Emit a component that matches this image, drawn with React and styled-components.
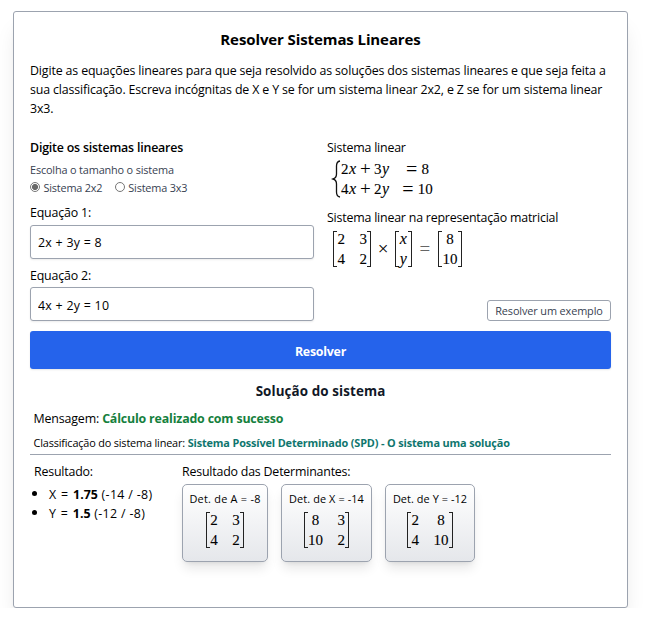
import React, { useState } from "react";
import styled, { createGlobalStyle } from "styled-components";

const line = "#9ca3af";

const GlobalStyle = createGlobalStyle`
  * { box-sizing: border-box; }
  body {
    margin: 0;
    background: #fff;
    color: #000;
    font-family: "Open Sans", "Noto Sans", sans-serif;
    font-size: 12.4px;
    line-height: 19px;
    letter-spacing: -0.15px;
    overflow: hidden;
  }
  h1, h2, h3, p, ul { margin: 0; padding: 0; }
`;

const Card = styled.main`
  width: 615px;
  height: 597px;
  margin: 11px 0 0 13px;
  padding: 16px;
  border: 1px solid ${line};
  border-radius: 3px;
  background: #fff;
  box-shadow: 0 16px 20px -4px rgba(0, 0, 0, 0.1), 0 6px 8px -5px rgba(0, 0, 0, 0.1);
`;

const Title = styled.h1`
  font-size: 15px;
  font-weight: 700;
  line-height: 22px;
  letter-spacing: -0.1px;
  text-align: center;
`;

const Intro = styled.p`
  margin-top: 11px;
  letter-spacing: -0.145px;
  white-space: pre-line;
`;

const Columns = styled.div`
  display: grid;
  grid-template-columns: 284px 284px;
  column-gap: 13px;
  height: 183px;
  margin-top: 20px;
`;

const Column = styled.section`
  display: flex;
  flex-direction: column;
`;

const FormTitle = styled.h2`
  font-size: 12.4px;
  font-weight: 600;
  line-height: 20px;
  letter-spacing: -0.2px;
`;

const Hint = styled.p`
  margin-top: 3px;
  font-size: 10.9px;
  line-height: 18px;
  letter-spacing: -0.16px;
  color: #374151;
`;

const Choices = styled.div`
  display: flex;
  gap: 12.5px;
  height: 17px;
`;

const Choice = styled.label`
  display: flex;
  align-items: center;
  gap: 3.5px;
  font-size: 10.9px;
  letter-spacing: -0.2px;
  color: #374151;
`;

const Radio = styled.input`
  appearance: none;
  width: 10px;
  height: 10px;
  margin: -2px 0 0;
  border: 1px solid #767676;
  border-radius: 50%;
  background: #fff;
  &:checked { background: radial-gradient(circle, #686868 2.7px, #fff 3.4px); }
`;

const Label = styled.label`
  height: 20px;
  margin-top: ${(p) => p.$gap}px;
  line-height: 20px;
  letter-spacing: -0.18px;
`;

const Field = styled.input`
  width: 100%;
  height: 34px;
  margin-top: ${(p) => p.$gap}px;
  padding: ${(p) => p.$drop}px 7px 0;
  border: 1px solid ${line};
  border-radius: 3px;
  background: #fff;
  color: #000;
  font: inherit;
  letter-spacing: 0.27px;
  box-shadow: 0 1px 2px rgba(0, 0, 0, 0.08);
  outline: none;
`;

const Caption = styled.p`
  height: 20px;
  line-height: 20px;
  letter-spacing: -0.2px;
  margin-top: ${(p) => p.$gap || 0}px;
`;

const MathRow = styled.div`
  display: flex;
  align-items: center;
  height: 40px;
  font-family: "Liberation Serif", serif;
  font-size: 15px;
  line-height: 20px;
  letter-spacing: 0;
  color: #000;
  -webkit-text-stroke: 0.1px #000;
`;

const SystemRow = styled(MathRow)`
  height: 40px;
  margin-top: 1px;
  padding-left: 4px;
`;

const MatrixRow = styled(MathRow)`
  margin-top: 1px;
  padding-left: 6px;
`;

const BraceIcon = styled.svg`
  width: 10px;
  height: 38px;
  flex: none;
`;

const SystemSide = styled.div`
  display: grid;
  grid-template-rows: 20px 20px;
  width: ${(p) => p.$width}px;
  justify-items: ${(p) => p.$align};
`;

const Equation = styled.span`
  display: flex;
  align-items: center;
`;

const Variable = styled.i`
  display: inline-block;
  width: 8px;
  text-align: center;
  font-size: 16px;
`;

const Operator = styled.span`
  width: ${(p) => p.$width || 17.5}px;
  font-size: ${(p) => p.$size || 19}px;
  text-align: ${(p) => p.$align || "center"};
  color: ${(p) => (p.$soft ? "#666" : "#000")};
  -webkit-text-stroke: 0;
`;

const Bracketed = styled.span`
  display: flex;
`;

const Bracket = styled.span`
  width: 4px;
  height: 36px;
  border: solid #222;
  border-width: ${(p) => (p.$right ? "1px 1px 1px 0" : "1px 0 1px 1px")};
  margin-top: 2px;
`;

const Cells = styled.span`
  display: grid;
  grid-template-columns: repeat(${(p) => p.$cols}, auto);
  grid-template-rows: 20px 20px;
  column-gap: 14.4px;
  padding: 0 0.5px;
  justify-items: center;
`;

const ExampleButton = styled.button`
  align-self: flex-end;
  width: 124px;
  height: 21px;
  margin-top: auto;
  padding: 0;
  border: 1px solid ${line};
  border-radius: 3px;
  background: #fff;
  color: #374151;
  font: 520 10.9px/19px "Open Sans", sans-serif;
  letter-spacing: -0.12px;
`;

const SolveButton = styled.button`
  display: block;
  width: 100%;
  height: 38px;
  margin-top: 10px;
  padding: 3px 0 0;
  border: 0;
  border-radius: 3px;
  background: #2563eb;
  color: #fff;
  font: 700 12.4px/20px "Open Sans", sans-serif;
  letter-spacing: -0.25px;
  box-shadow: 0 1px 2px rgba(0, 0, 0, 0.1);
`;

const SolutionTitle = styled.h2`
  margin-top: 12px;
  font-size: 13.4px;
  font-weight: 700;
  line-height: 20px;
  letter-spacing: 0.1px;
  text-align: center;
  color: #111827;
`;

const Message = styled.p`
  margin-top: 8px;
  padding-left: 3.5px;
  line-height: 20px;
`;

const Success = styled.strong`
  color: #15803d;
  letter-spacing: -0.17px;
`;

const Classification = styled.p`
  height: 26px;
  padding: 5px 0 0 3.5px;
  border-bottom: 1px solid ${line};
  font-size: 10.9px;
  line-height: 18px;
  letter-spacing: -0.17px;
`;

const Kind = styled.strong`
  color: #0f766e;
  letter-spacing: -0.145px;
`;

const Results = styled.div`
  display: grid;
  grid-template-columns: 148px 1fr;
  padding: 7px 0 0 4px;
`;

const Roots = styled.ul`
  margin-top: 2px;
  padding-left: 15px;
`;

const Root = styled.li`
  height: 19px;
  line-height: 19px;
  &::marker { font-size: 14px; }
`;

const Unknown = styled.span`
  letter-spacing: 0.85px;
`;

const RootValue = styled.strong`
  letter-spacing: 0;
`;

const Ratio = styled.span`
  margin-left: 0.6px;
  letter-spacing: 0.34px;
`;

const Determinants = styled.div`
  display: flex;
  gap: 13px;
  margin-top: 2px;
`;

const Determinant = styled.article`
  display: flex;
  flex-direction: column;
  align-items: center;
  width: ${(p) => p.$width}px;
  height: 78px;
  padding-top: 5px;
  border: 1px solid ${line};
  border-radius: 5px;
  background: linear-gradient(#fff, #e5e7eb);
  box-shadow: 0 8px 12px -2px rgba(0, 0, 0, 0.1), 0 3px 5px -3px rgba(0, 0, 0, 0.1);
`;

const DeterminantName = styled.h3`
  font-size: 10.9px;
  font-weight: 520;
  line-height: 18px;
  letter-spacing: ${(p) => p.$spacing}px;
  white-space: nowrap;
`;

const DeterminantValue = styled(MathRow)`
  margin-top: 2px;
`;

function Matrix({ rows }) {
  return (
    <Bracketed>
      <Bracket />
      <Cells $cols={rows[0].length}>
        {rows.flat().map((cell, i) =>
          /[a-z]/.test(cell) ? <Variable key={i}>{cell}</Variable> : <span key={i}>{cell}</span>
        )}
      </Cells>
      <Bracket $right />
    </Bracketed>
  );
}

function Sum({ a, b }) {
  return (
    <Equation>
      {a}<Variable>x</Variable>
      <Operator>+</Operator>
      {b}<Variable>y</Variable>
    </Equation>
  );
}

const determinants = [
  { name: "A", value: -8, width: 86, spacing: 0.25, rows: [["2", "3"], ["4", "2"]] },
  { name: "X", value: -14, width: 91, spacing: 0.1, rows: [["8", "3"], ["10", "2"]] },
  { name: "Y", value: -12, width: 90, spacing: 0.07, rows: [["2", "8"], ["4", "10"]] },
];

export default function App() {
  const [size, setSize] = useState("2x2");
  const [first, setFirst] = useState("2x + 3y = 8");
  const [second, setSecond] = useState("4x + 2y = 10");

  return (
    <>
      <GlobalStyle />
      <Card>
        <Title>Resolver Sistemas Lineares</Title>
        <Intro>
          {"Digite as equações lineares para que seja resolvido as soluções dos sistemas lineares e que seja feita a\nsua classificação. Escreva incógnitas de X e Y se for um sistema linear 2x2, e Z se for um sistema linear\n3x3."}
        </Intro>

        <Columns>
          <Column>
            <FormTitle>Digite os sistemas lineares</FormTitle>
            <Hint>Escolha o tamanho o sistema</Hint>
            <Choices>
              {["2x2", "3x3"].map((s) => (
                <Choice key={s}>
                  <Radio type="radio" name="size" checked={size === s} onChange={() => setSize(s)} />
                  Sistema {s}
                </Choice>
              ))}
            </Choices>
            <Label $gap={7}>Equação 1:</Label>
            <Field $gap={2} $drop={1} value={first} onChange={(e) => setFirst(e.target.value)} />
            <Label $gap={7}>Equação 2:</Label>
            <Field $gap={1} $drop={3} value={second} onChange={(e) => setSecond(e.target.value)} />
          </Column>

          <Column>
            <Caption>Sistema linear</Caption>
            <SystemRow>
              <BraceIcon viewBox="0 0 10 38" fill="none" stroke="#111" strokeWidth="1.3">
                <path d="M9 1C6 1.5 5.500 3.500 5.500 6v8c0 3-1 4.300-3.500 5C4.500 19.700 5.500 21 5.500 24v8c0 2.500.5 4.500 3.500 5" />
              </BraceIcon>
              <SystemSide $width={60} $align="start">
                <Sum a={2} b={3} />
                <Sum a={4} b={2} />
              </SystemSide>
              <SystemSide $width={33} $align="center">
                <Equation><Operator $width={15.5} $size={20} $align="left">=</Operator>8</Equation>
                <Equation><Operator $width={15.5} $size={20} $align="left">=</Operator>10</Equation>
              </SystemSide>
            </SystemRow>
            <Caption $gap={9}>Sistema linear na representação matricial</Caption>
            <MatrixRow>
              <Matrix rows={[["2", "3"], ["4", "2"]]} />
              <Operator $width={23.5} $size={19}>×</Operator>
              <Matrix rows={[["x"], ["y"]]} />
              <Operator $width={26} $soft>=</Operator>
              <Matrix rows={[["8"], ["10"]]} />
            </MatrixRow>
            <ExampleButton>Resolver um exemplo</ExampleButton>
          </Column>
        </Columns>

        <SolveButton>Resolver</SolveButton>

        <SolutionTitle>Solução do sistema</SolutionTitle>
        <Message>Mensagem: <Success>Cálculo realizado com sucesso</Success></Message>
        <Classification>
          Classificação do sistema linear: <Kind>Sistema Possível Determinado (SPD) - O sistema uma solução</Kind>
        </Classification>

        <Results>
          <section>
            <Caption>Resultado:</Caption>
            <Roots>
              <Root><Unknown>X = </Unknown><RootValue>1.75</RootValue> <Ratio>(-14 / -8)</Ratio></Root>
              <Root><Unknown>Y = </Unknown><RootValue>1.5</RootValue> <Ratio>(-12 / -8)</Ratio></Root>
            </Roots>
          </section>
          <section>
            <Caption>Resultado das Determinantes:</Caption>
            <Determinants>
              {determinants.map((d) => (
                <Determinant key={d.name} $width={d.width}>
                  <DeterminantName $spacing={d.spacing}>Det. de {d.name} = {d.value}</DeterminantName>
                  <DeterminantValue><Matrix rows={d.rows} /></DeterminantValue>
                </Determinant>
              ))}
            </Determinants>
          </section>
        </Results>
      </Card>
    </>
  );
}
